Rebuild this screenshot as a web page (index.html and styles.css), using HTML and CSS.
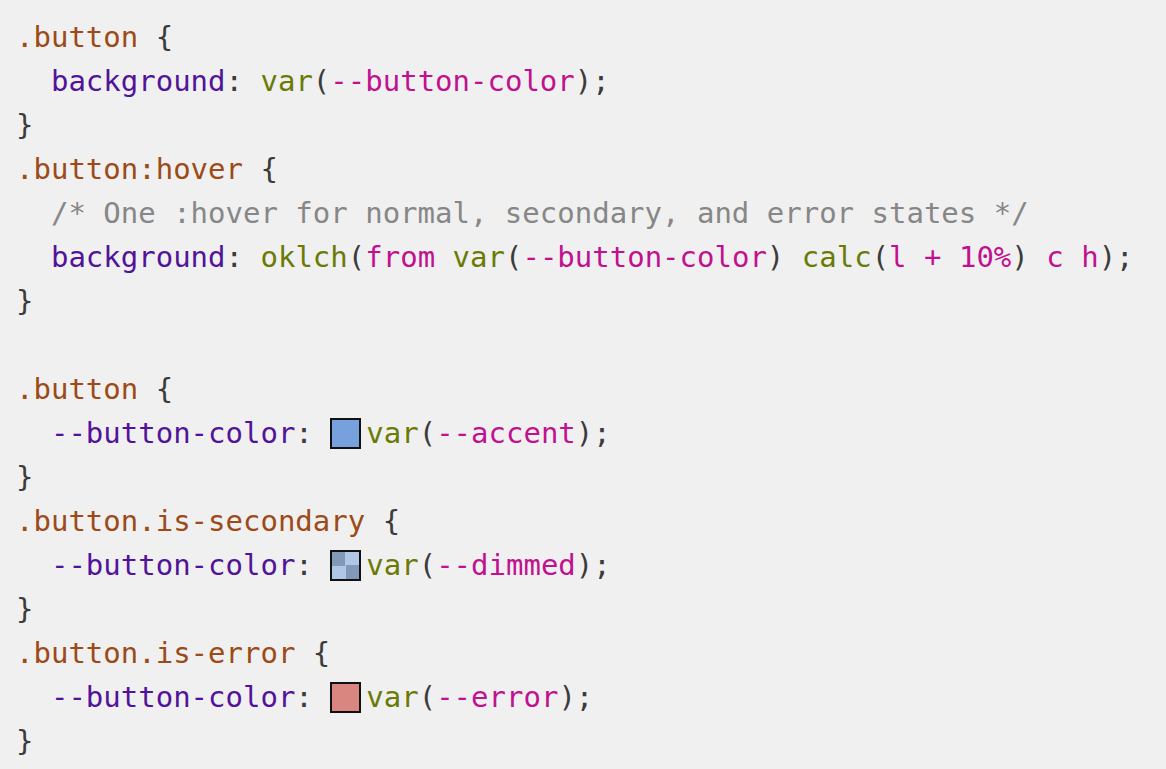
FILE: index.html
```html
<!DOCTYPE html>
<html lang="en">
<head>
<meta charset="utf-8">
<title>Code</title>
<link rel="stylesheet" href="styles.css">
</head>
<body>
<pre class="code"><span class="sel">.button</span> <span class="p">{</span>
  <span class="prop">background</span><span class="p">:</span> <span class="fn">var</span><span class="p">(</span><span class="val">--button-color</span><span class="p">);</span>
<span class="p">}</span>
<span class="sel">.button:hover</span> <span class="p">{</span>
  <span class="cm">/* One :hover for normal, secondary, and error states */</span>
  <span class="prop">background</span><span class="p">:</span> <span class="fn">oklch</span><span class="p">(</span><span class="val">from</span> <span class="fn">var</span><span class="p">(</span><span class="val">--button-color</span><span class="p">)</span> <span class="fn">calc</span><span class="p">(</span><span class="val">l + 10%</span><span class="p">)</span> <span class="val">c h</span><span class="p">);</span>
<span class="p">}</span>

<span class="sel">.button</span> <span class="p">{</span>
  <span class="prop">--button-color</span><span class="p">:</span> <span class="sw sw-accent"></span><span class="fn">var</span><span class="p">(</span><span class="val">--accent</span><span class="p">);</span>
<span class="p">}</span>
<span class="sel">.button.is-secondary</span> <span class="p">{</span>
  <span class="prop">--button-color</span><span class="p">:</span> <span class="sw sw-dimmed"></span><span class="fn">var</span><span class="p">(</span><span class="val">--dimmed</span><span class="p">);</span>
<span class="p">}</span>
<span class="sel">.button.is-error</span> <span class="p">{</span>
  <span class="prop">--button-color</span><span class="p">:</span> <span class="sw sw-error"></span><span class="fn">var</span><span class="p">(</span><span class="val">--error</span><span class="p">);</span>
<span class="p">}</span></pre>
</body>
</html>
```
FILE: styles.css
```css
html, body {
  margin: 0;
  padding: 0;
  background: #f0f0f0;
}

.code {
  margin: 0;
  padding: 15px 16px;
  font-family: "DejaVu Sans Mono", "Liberation Mono", monospace;
  font-size: 29px;
  line-height: 44px;
  color: #3b3b3b;
  white-space: pre;
}

.sel { color: #9c4a17; }
.prop { color: #52139a; }
.fn { color: #6b7a05; }
.val { color: #c01190; }
.p { color: #3b3b3b; }
.cm { color: #878787; }

.sw {
  display: inline-block;
  box-sizing: border-box;
  width: 31px;
  height: 31px;
  border: 2px solid #111;
  vertical-align: -6px;
  margin-right: 5px;
}

.sw-accent { background: #77a1dd; }
.sw-error { background: #d98680; }
.sw-dimmed {
  background: conic-gradient(#b1c7e8 0 25%, #8299ba 0 50%, #b1c7e8 0 75%, #8299ba 0);
}
```
